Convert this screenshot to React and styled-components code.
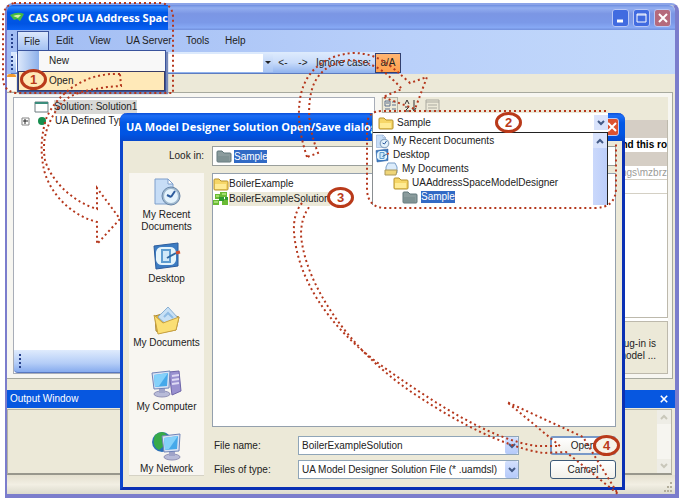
import React from "react";
import styled, { createGlobalStyle, css } from "styled-components";

const Global = createGlobalStyle`
  *, *::before, *::after { box-sizing: border-box; }
  body { margin: 0; background: #fff; color: #222; font: 10px/12px "Liberation Sans", Arial, sans-serif; }
  button, input, select { font: inherit; color: inherit; margin: 0; padding: 0; border: 0; background: none; }
  select { appearance: none; }
  svg { display: block; flex: none; }
`;

const Page = styled.div`
  position: relative;
  display: flex;
  min-height: 100vh;
  padding: 3px 1px 2px 5px;
  overflow: hidden;
`;

/* ---------- main window ---------- */
const MainWindow = styled.main`
  flex: 1;
  min-width: 0;
  display: flex;
  flex-direction: column;
  border: 2px solid #7b7dcc;
  border-top-color: #8ca4e8;
  border-bottom-width: 4px;
  border-right-width: 4px;
  border-radius: 8px 8px 0 0;
  background: #ece9d8;
`;
const TitleBar = styled.header`
  display: flex;
  align-items: stretch;
  height: 25px;
  background: linear-gradient(#6f8fe0, #93aef0 12%, #7b96e4 35%, #7b99e8 70%, #86a8f4 90%, #7290dc);
  border-radius: 6px 6px 0 0;
`;
const TitleActive = styled.h1`
  flex: none;
  display: flex;
  align-items: center;
  gap: 4px;
  width: 161px;
  margin: 0;
  padding-left: 3px;
  white-space: nowrap;
  color: #fff;
  font: bold 11px/14px "Open Sans", "Liberation Sans", sans-serif;
  background: linear-gradient(#0a4fd8, #2a86ff 8%, #0058e8 30%, #0054e3 75%, #0a62f4);
  border-radius: 6px 0 0 0;
`;
const WindowButtons = styled.div`
  display: flex;
  align-items: center;
  gap: 4px;
  margin-left: auto;
  padding-right: 4px;
`;
const CaptionButton = styled.button`
  && {
    flex: none;
    display: grid;
    place-items: center;
    width: ${(p) => (p.$small ? 15 : 17)}px;
    height: 18px;
    border: 1px solid #b9c8f6;
    border-radius: 3px;
    background: ${(p) => p.$tone};
  }
`;
const MenuBar = styled.nav`
  display: flex;
  align-items: center;
  height: 22px;
  padding-left: 4px;
  background: linear-gradient(90deg, #a1bcf3, #b9d0fa 60%, #c3d9fb);
`;
const Grip = styled.span`
  flex: none;
  width: 2px;
  height: 14px;
  margin-right: ${(p) => p.$gap || 4}px;
  background: repeating-linear-gradient(#27418c 0 2px, transparent 2px 4px);
`;
const MenuButton = styled.button`
  height: 21px;
  width: ${(p) => p.$w}px;
  text-align: left;
  padding-left: 7px;
  white-space: nowrap;
  ${(p) => p.$open && css`border: 1px solid #39539c; border-bottom: 0; padding-left: 6px; background: linear-gradient(#dce8fc, #9dbdf2);`}
`;
const ToolArea = styled.div`
  display: flex;
  height: 22px;
  background: linear-gradient(90deg, #a1bcf3, #b9d0fa 60%, #c3d9fb);
`;
const ToolStrip = styled.div`
  display: flex;
  align-items: center;
  width: 390px;
  margin-left: 4px;
  border-radius: 0 4px 4px 0;
  border-bottom: 1px solid #5d7cc0;
  background: linear-gradient(#deebfd, #c9dcfa 50%, #8fb2ee);
`;
const SearchBox = styled.input`
  flex: 1;
  min-width: 0;
  height: 18px;
  && { background: #fff; }
`;
const SearchArrow = styled.button`
  width: 10px;
  height: 18px;
  && { background: linear-gradient(#d9e7fc, #a8c4f3); }
`;
const ToolButton = styled.button`
  width: 20px;
  text-align: center;
  white-space: nowrap;
`;
const CaseLabel = styled.label`
  padding: 0 4px 0 3px;
  white-space: nowrap;
`;
const CaseButton = styled.button`
  width: 26px;
  height: 20px;
  border: 1px solid #33406e;
  background: linear-gradient(#ffb572, #ffa04d);
`;
const TabRow = styled.div`
  height: 18px;
  background: #ece9d8;
`;
const OrangeTab = styled.div`
  width: 9px;
  height: 17px;
  border-top: 3px solid #f29a2e;
  border-radius: 3px 3px 0 0;
  background: #fdfcf8;
`;
const Workspace = styled.div`
  flex: 1;
  display: grid;
  grid-template-columns: 362px minmax(0, 1fr);
  gap: 6px;
  min-height: 0;
  margin-right: 2px;
  padding: 4px 4px 4px 6px;
  border: 1px solid #a7a99e;
  border-left: 0;
  background: #f7f6f1;
`;
const TreePane = styled.section`
  display: flex;
  flex-direction: column;
  border: 1px solid #a8adb8;
  background: #fff;
`;
const Tree = styled.ul`
  flex: 1;
  margin: 0;
  padding: 2px 7px;
  list-style: none;
`;
const TreeRow = styled.li`
  display: flex;
  align-items: center;
  gap: ${(p) => p.$gap}px;
  height: 14px;
  padding-left: ${(p) => p.$indent}px;
  white-space: nowrap;
`;
const TreeText = styled.span`
  padding: 1px 0;
  background: ${(p) => (p.$sel ? "#d8d8d6" : "transparent")};
`;
const PaneFooter = styled.div`
  display: flex;
  align-items: center;
  gap: 94px;
  height: 23px;
  padding-left: 5px;
  border-bottom: 1px solid #5878c0;
  border-radius: 0 0 4px 4px;
  background: linear-gradient(#dfebfd, #b4cdf7 60%, #86abee);
`;
const PropPane = styled.section`
  display: flex;
  flex-direction: column;
  min-width: 0;
  background: #fff;
`;
const PropTools = styled.div`
  display: flex;
  align-items: center;
  gap: 5px;
  height: 23px;
  padding: 0 0 7px 1px;
  background: #ece9d8;
`;
const IconButton = styled.button`
  && {
    display: grid;
    place-items: center;
    width: 16px;
    height: 16px;
    border: 1px solid ${(p) => (p.$on ? "#b5b4a8" : "transparent")};
  }
`;
const PropRows = styled.div`
  flex: 1;
  border-right: 1px solid #bdb9ac;
  border-bottom: 1px solid #bdb9ac;
  background: #fff;
`;
const PropRow = styled.div`
  height: ${(p) => p.$h}px;
  text-align: right;
  white-space: nowrap;
  line-height: 14px;
  border-bottom: ${(p) => (p.$line ? "1px solid #d4d0c4" : "0")};
  background: ${(p) => (p.$band ? "#d5cec5" : "#fff")};
  font-weight: ${(p) => (p.$bold ? "bold" : "normal")};
  color: ${(p) => (p.$bold ? "#000" : "#9b9b98")};
`;
const PropHelp = styled.p`
  height: 53px;
  margin: 3px 0 0;
  padding: 16px 11px 0 0;
  text-align: right;
  border: 1px solid #bdb9ac;
  background: #ece9d8;
`;
const OutputTitle = styled.h2`
  display: flex;
  align-items: center;
  justify-content: space-between;
  height: 18px;
  margin: 11px 0 0;
  padding: 0 6px 0 3px;
  color: #fff;
  font: 10px/12px "Liberation Sans", sans-serif;
  background: #0757e0;
`;
const CloseButton = styled.button`
  display: grid;
  place-items: center;
  width: 11px;
  height: 14px;
`;
const OutputPanel = styled.section`
  display: flex;
  justify-content: flex-end;
  height: 66px;
  margin: 1px 3px 0 0;
  border: 1px solid #b5b3a5;
  border-bottom: 2px solid #98978c;
`;
const FadedScroll = styled.div`
  display: flex;
  flex-direction: column;
  justify-content: space-between;
  width: 14px;
  background: #f6f5f0;
`;
const FadedArrow = styled.button`
  && {
    display: grid;
    place-items: center;
    height: 14px;
    background: #eeede6;
  }
`;
const StatusBar = styled.footer`
  display: flex;
  justify-content: flex-end;
  align-items: flex-end;
  height: 19px;
  padding: 0 2px 2px;
  background: linear-gradient(#e4e0cf, #f2efe3 50%, #dcdacd);
`;

/* ---------- file menu ---------- */
const FileMenu = styled.div`
  position: absolute;
  top: 50px;
  left: 17px;
  width: 149px;
  border: 1px solid #39539c;
  background: #f8f8f8;
  box-shadow: 2px 2px 1px #7688b8;
`;
const FileMenuItem = styled.button`
  display: block;
  width: 100%;
  height: 20px;
  padding-left: 31px;
  text-align: left;
  background: ${(p) => (p.$hot ? "#ffe9b8" : "linear-gradient(90deg, #dce8fb, #8cb0ea 21px, #f8f8f8 21px)")};
  ${(p) => p.$hot && css`outline: 1px solid #3a3c66; outline-offset: -1px;`}
`;

/* ---------- dialog ---------- */
const Dialog = styled.div`
  position: absolute;
  inset: 113px 55px 10px 120px;
  display: flex;
  flex-direction: column;
  border: 3px solid #0c46cc;
  border-top: 0;
  border-right-color: #0a30b4;
  border-bottom-color: #0a30b4;
  border-radius: 7px 7px 0 0;
  background: #ece9d8;
`;
const DialogTitle = styled.header`
  display: flex;
  align-items: center;
  justify-content: space-between;
  height: 28px;
  margin: 0 -3px;
  padding: 0 6px;
  color: #fff;
  font: bold 11px/14px "Open Sans", "Liberation Sans", sans-serif;
  white-space: nowrap;
  border-radius: 7px 7px 0 0;
  background: linear-gradient(#0a4ed8, #1c6df4 10%, #0057e6 35%, #0054e3 75%, #0648cc);
`;
const DialogBody = styled.div`
  flex: 1;
  display: grid;
  grid-template-columns: 75px minmax(0, 1fr);
  grid-template-rows: 20px minmax(0, 1fr);
  gap: 7px;
  min-height: 0;
  padding: 5px 6px 8px 6px;
`;
const LookLabel = styled.label`
  align-self: center;
  text-align: right;
`;
const LookBox = styled.div`
  display: flex;
  align-items: center;
  gap: 2px;
  margin-left: 1px;
  padding-left: 3px;
  border: 1px solid #9a9f9c;
  background: #fff;
`;
const Picked = styled.select`
  && {
    width: 33px;
    height: 13px;
    line-height: 13px;
    color: #fff;
    background: #316ac5;
  }
`;
const Places = styled.nav`
  display: flex;
  flex-direction: column;
  margin-bottom: 3px;
  background: #f8f6f1;
  border-bottom: 1px solid #d5d2c5;
`;
const Place = styled.button`
  flex: none;
  display: flex;
  flex-direction: column;
  align-items: center;
  justify-content: flex-start;
  gap: 2px;
  height: ${(p) => p.$h || 64}px;
  && { padding-top: ${(p) => (p.$h ? 2 : 4)}px; }
  line-height: 12px;
  white-space: pre;
`;
const FileSide = styled.div`
  display: flex;
  flex-direction: column;
  min-width: 0;
  gap: 9px;
  padding-left: 1px;
`;
const FileList = styled.ul`
  flex: 1;
  margin: 0;
  padding: 2px 0;
  list-style: none;
  border: 1px solid #94a0ad;
  background: #fff;
`;
const FileRow = styled.li`
  display: flex;
  align-items: center;
  height: 15px;
`;
const FileName = styled.span`
  padding: 1px 0;
  background: ${(p) => (p.$sel ? "#ece9d8" : "transparent")};
`;
const Form = styled.form`
  display: grid;
  grid-template-columns: 81px minmax(0, 1fr) 66px;
  grid-auto-rows: 19px;
  row-gap: 5px;
  align-items: center;
`;
const FieldLabel = styled.label`
  padding-left: 2px;
  white-space: nowrap;
`;
const Field = styled.div`
  display: flex;
  align-self: stretch;
  margin: 0 31px 0 5px;
  border: 1px solid #8fa5b8;
  background: #fff;
`;
const FieldInput = styled.input`
  flex: 1;
  min-width: 0;
  && { padding: 0 3px; }
`;
const FieldSelect = styled.select`
  flex: 1;
  min-width: 0;
  && { padding: 0 3px; }
`;
const Drop = styled.button`
  && {
    flex: none;
    display: grid;
    place-items: center;
    width: 13px;
    border-radius: 2px;
    background: linear-gradient(#d3e0fd, #b5cafa);
  }
`;
const PushButton = styled.button`
  && {
    height: 19px;
    border: ${(p) => (p.$main ? "2px solid #7899c8" : "1px solid #3d5a78")};
    border-radius: 3px;
    background: linear-gradient(#fff, #f1f0ea);
  }
`;

/* ---------- open look-in list ---------- */
const Popup = styled.div`
  position: absolute;
  top: 113px;
  left: 372px;
  right: 72px;
  background: #fff;
  border-left: 1px solid #8a8f92;
`;
const PopupHead = styled.div`
  display: flex;
  align-items: center;
  gap: 3px;
  height: 19px;
  padding-left: 5px;
`;
const PopupSelect = styled.select`
  flex: 1;
  height: 17px;
`;
const PopupBody = styled.div`
  display: flex;
  height: 73px;
  border: solid #222;
  border-width: 1px 1px 0 0;
`;
const PopupList = styled.ul`
  flex: 1;
  margin: 0;
  padding: 1px 0 0;
  list-style: none;
`;
const PopupRow = styled.li`
  display: flex;
  align-items: center;
  gap: 3px;
  height: 14px;
  padding-left: ${(p) => 2 + p.$level * 9}px;
`;
const PopupText = styled.span`
  ${(p) => p.$sel && css`color: #fff; background: #316ac5;`}
`;
const PopupScroll = styled.div`
  width: 14px;
  background: linear-gradient(90deg, #cad8fb, #bccefa);
`;
const PopupArrow = styled.button`
  && {
    display: grid;
    place-items: center;
    width: 14px;
    height: 15px;
    background: #d9e3fc;
  }
`;

/* ---------- callouts ---------- */
const Arrows = styled.svg`
  position: absolute;
  top: 0;
  left: 0;
  pointer-events: none;
  fill: none;
  stroke: #b5371c;
  stroke-width: 2;
  stroke-dasharray: 2 3;
`;
const Callout = styled.span`
  position: absolute;
  top: ${(p) => p.$y}px;
  left: ${(p) => p.$x}px;
  display: grid;
  place-items: center;
  width: 27px;
  height: 21px;
  border: 3px solid #b93a1a;
  border-radius: 50%;
  color: #b93a1a;
  background: ${(p) => p.$fill || "#fff"};
  font: bold 13px/15px "Liberation Sans", sans-serif;
`;

/* ---------- icons ---------- */
const Folder = ({ gray }) => (
  <svg width="16" height="14" viewBox="0 0 16 14">
    <path d="M1 12V3q0-1 1-1h4l2 2h6q1 0 1 1v7q0 1-1 1H2q-1 0-1-1Z" fill={gray ? "#8b9c9d" : "#f6d667"} stroke={gray ? "#60777a" : "#b5912c"} />
    <path d="M3 6h10M2 7v5h11V7Z" fill={gray ? "#7f9293" : "#ffeb94"} />
  </svg>
);
const Solution = () => (
  <svg width="16" height="13" viewBox="0 0 16 13">
    <path d="M7 0h7v5H7ZM2 2h5v5H2ZM0 8h6v5H0ZM9 7h6v6H9Z" fill="#6abb35" /><path d="M9 1h4v2H9ZM1 9h4v2H1ZM3 3h3v2H3Z" fill="#a3dd70" /><path d="M6 5h5v4H6ZM12 5h3v3h-3Z" fill="#2f9a32" />
  </svg>
);
const Chevron = ({ up, color = "#435a86" }) => (
  <svg width="8" height="6" viewBox="0 0 8 6"><path d={up ? "M1 5l3-3 3 3" : "M1 1l3 3 3-3"} fill="none" stroke={color} strokeWidth="2" /></svg>
);
const Cross = ({ size = 10, width = 2 }) => (
  <svg width={size} height={size} viewBox="0 0 10 10"><path d="M1 1l8 8M9 1l-8 8" stroke="#fff" strokeWidth={width} /></svg>
);
const DocClock = ({ s = 30 }) => (
  <svg width={s} height={s} viewBox="0 0 30 30">
    <path d="M3 2h13l5 5v20H3Z" fill="#c7ddf6" stroke="#7f9fcb" /><path d="M16 2v5h5Z" fill="#fff" stroke="#7f9fcb" />
    <circle cx="19" cy="19" r="9" fill="#9fb8ce" stroke="#6886a8" /><circle cx="19" cy="19" r="7" fill="#e5f3fc" /><path d="M19 20l4-6M19 20l-4-2" stroke="#2c5b9d" strokeWidth="2" />
  </svg>
);
const DesktopIcon = ({ s = 30 }) => (
  <svg width={s} height={s} viewBox="0 0 30 30">
    <path d="M2 5l24-3v23l-22 3Z" fill="#3d7cc2" stroke="#2c5c9c" /><path d="M4 11q1-5 6-5h8q5 0 6 5v8q-1 5-6 5h-8q-5 0-6-5Z" fill="#e5f4fb" />
    <path d="M10 9h8v12h-8Z" fill="#cfe8f8" stroke="#5d9cd0" strokeWidth="2" /><path d="M15 17l9-5" stroke="#2d67a2" strokeWidth="2" /><path d="M24 12l4-1" stroke="#d4502e" strokeWidth="3" />
  </svg>
);
const DocsIcon = () => (
  <svg width="30" height="30" viewBox="0 0 30 30">
    <path d="M3 11l10-3 14 4-3 13-16 3-4-2Z" fill="#e3b740" stroke="#a5873c" /><path d="M6 12l10-10 10 11-9 9Z" fill="#c7e0f5" stroke="#8bb0d2" /><path d="M12 12l4-4 5 5" fill="none" stroke="#8fbce4" strokeWidth="2" />
    <path d="M2 10l9 8 16-6-3 13-18 4Z" fill="#fbdf74" stroke="#c9a241" />
  </svg>
);
const Screen = ({ globe }) => (
  <svg width="32" height="30" viewBox="0 0 32 30">
    {globe ? (
      <g><circle cx="11" cy="11" r="10" fill="#2a70b8" /><path d="M4 4q8-6 12 0l-4 5 1 6-5 4q-8-4-4-15" fill="#37aa49" /></g>
    ) : (
      <g><path d="M18 3l10-1 2 20-9 4Z" fill="#9a91d0" stroke="#6e65a8" /><path d="M21 7l7-1M21 11l7-1M21 15l7-1" stroke="#dedaf4" strokeWidth="2" /></g>
    )}
    <g transform={globe ? "translate(10 2)" : "translate(0 1)"}>
      <ellipse cx="11" cy="24" rx="8" ry="3" fill="#b8bbd8" stroke="#9091b5" /><path d="M8 17h6v6H8Z" fill="#9fa3c8" />
      <path d="M1 3l18-2-1 17-15 1Z" fill="#d8e2f3" stroke="#7084b8" /><path d="M3 5l14-2-1 13-12 1Z" fill="#45a9ea" /><path d="M3 5l14-2-9 13-4 1Z" fill="#84d1fa" />
    </g>
  </svg>
);
const Dots = () => (
  <svg width="10" height="10" viewBox="0 0 10 10"><path d="M7 0h2v2H7ZM4 4h2v2H4ZM7 4h2v2H7ZM1 8h2v2H1ZM4 8h2v2H4ZM7 8h2v2H7Z" fill="#b3ae9b" /></svg>
);

const menus = [["File", 32, true], ["Edit", 33], ["View", 37], ["UA Server", 60], ["Tools", 39], ["Help", 40]];
const lookRows = [
  ["My Recent Documents", 0, <DocClock s={15} />],
  ["Desktop", 0, <DesktopIcon s={15} />],
  ["My Documents", 1, <svg width="15" height="14" viewBox="0 0 15 14"><path d="M2 5l2-4h7l2 4v6H2Z" fill="#dcecfb" stroke="#7b9fc8" /><path d="M1 8h12l-1 5H1Z" fill="#efd579" stroke="#a9975a" /></svg>],
  ["UAAddressSpaceModelDesigner", 2, <Folder />],
  ["Sample", 3, <Folder gray />, true],
];

function Main() {
  return (
    <MainWindow>
      <TitleBar>
        <TitleActive>
          <svg width="14" height="11" viewBox="0 0 14 11"><path d="M0 3Q8-1 14 2L10 9 7 7 4 8Z" fill="#45ba42" /><path d="M3 4q5-2 8-1L8 6Z" fill="#d5f0a8" /></svg>
          CAS OPC UA Address Spac
        </TitleActive>
        <WindowButtons>
          <CaptionButton aria-label="Minimize" $tone="#416be0"><svg width="11" height="11"><path d="M2 9h6" stroke="#fff" strokeWidth="3" /></svg></CaptionButton>
          <CaptionButton aria-label="Maximize" $tone="#416be0"><svg width="11" height="11" viewBox="0 0 11 11"><path d="M1 2h9v8H1ZM1 3h9" fill="none" stroke="#fff" strokeWidth="1" /></svg></CaptionButton>
          <CaptionButton aria-label="Close" $tone="#b56a7c"><Cross /></CaptionButton>
        </WindowButtons>
      </TitleBar>
      <MenuBar>
        <Grip $gap={4} />
        {menus.map(([t, w, o]) => <MenuButton key={t} $w={w} $open={o}>{t}</MenuButton>)}
      </MenuBar>
      <ToolArea>
        <ToolStrip>
          <Grip $gap={3} />
          <SearchBox aria-label="Search" />
          <SearchArrow aria-label="History"><svg width="10" height="6"><path d="M2 1h6L5 4Z" fill="#222" /></svg></SearchArrow>
          <ToolButton>&lt;-</ToolButton>
          <ToolButton>-&gt;</ToolButton>
          <CaseLabel htmlFor="case">Ignore case:</CaseLabel>
          <CaseButton id="case">a/A</CaseButton>
        </ToolStrip>
      </ToolArea>
      <TabRow><OrangeTab /></TabRow>
      <Workspace>
        <TreePane>
          <Tree>
            <TreeRow $indent={13} $gap={5}>
              <svg width="15" height="12" viewBox="0 0 15 12"><path d="M1 1h13v10H1Z" fill="#fff" stroke="#6e7c80" /><path d="M1 2h13" stroke="#3b8d7c" strokeWidth="2" /></svg>
              <TreeText $sel>Solution: Solution1</TreeText>
            </TreeRow>
            <TreeRow $indent={0} $gap={8}>
              <svg width="9" height="9" viewBox="0 0 9 9"><path d="M1 1h7v7H1Z" fill="#fff" stroke="#858585" /><path d="M2 4h5M4 2v5" stroke="#222" /></svg>
              <svg width="9" height="9"><circle cx="4" cy="4" r="4" fill="#168e4e" /></svg>
              <TreeText>UA Defined Types</TreeText>
            </TreeRow>
          </Tree>
          <PaneFooter><Grip /><svg width="5" height="6"><circle cx="3" cy="3" r="2" fill="#222" /></svg></PaneFooter>
        </TreePane>
        <PropPane>
          <PropTools>
            <IconButton $on aria-label="Categorized"><svg width="14" height="12"><path d="M2 2h5v5H2ZM9 3h4M9 6h4M3 4h3M2 10h5M9 10h4" fill="none" stroke="#5c718e" /></svg></IconButton>
            <IconButton aria-label="Alphabetical"><svg width="14" height="13"><path d="M1 5l2-4 2 4M1 8h4l-4 4h4M10 1v10M8 9l2 3 2-3" fill="none" stroke="#333" /></svg></IconButton>
            <IconButton aria-label="Property pages"><svg width="16" height="13"><path d="M1 1h13v11H1ZM1 3h13M3 6h9M3 9h9" fill="none" stroke="#aaa99f" /></svg></IconButton>
          </PropTools>
          <PropRows>
            <PropRow $h={18} $band />
            <PropRow $h={14} $bold>nd this ro</PropRow>
            <PropRow $h={14} $band />
            <PropRow $h={14} $line>ngs\mzbrz</PropRow>
            <PropRow $h={14} $line />
          </PropRows>
          <PropHelp>ug-in is<br />model ...</PropHelp>
        </PropPane>
      </Workspace>
      <OutputTitle>Output Window<CloseButton aria-label="Close output"><Cross size={8} /></CloseButton></OutputTitle>
      <OutputPanel>
        <FadedScroll>
          <FadedArrow aria-label="Up"><Chevron up color="#c9c7ba" /></FadedArrow>
          <FadedArrow aria-label="Down"><Chevron color="#c9c7ba" /></FadedArrow>
        </FadedScroll>
      </OutputPanel>
      <StatusBar><Dots /></StatusBar>
    </MainWindow>
  );
}

function OpenDialog() {
  return (
    <Dialog role="dialog" aria-label="Open/Save">
      <DialogTitle>
        UA Model Designer Solution Open/Save dialog
        <CaptionButton $small aria-label="Close dialog" $tone="#dd5230"><Cross /></CaptionButton>
      </DialogTitle>
      <DialogBody>
        <LookLabel htmlFor="look">Look in:</LookLabel>
        <LookBox><Folder gray /><Picked id="look"><option>Sample</option></Picked></LookBox>
        <Places>
          <Place><DocClock />{"My Recent\nDocuments"}</Place>
          <Place><DesktopIcon />Desktop</Place>
          <Place><DocsIcon />My Documents</Place>
          <Place><Screen />My Computer</Place>
          <Place $h={46}><Screen globe />My Network</Place>
        </Places>
        <FileSide>
          <FileList>
            <FileRow><Folder /><FileName>BoilerExample</FileName></FileRow>
            <FileRow><Solution /><FileName $sel>BoilerExampleSolution</FileName></FileRow>
          </FileList>
          <Form onSubmit={(e) => e.preventDefault()}>
            <FieldLabel htmlFor="fname">File name:</FieldLabel>
            <Field><FieldInput id="fname" defaultValue="BoilerExampleSolution" /><Drop type="button" aria-label="Recent names"><Chevron /></Drop></Field>
            <PushButton $main>Open</PushButton>
            <FieldLabel htmlFor="ftype">Files of type:</FieldLabel>
            <Field><FieldSelect id="ftype"><option>UA Model Designer Solution File (* .uamdsl)</option></FieldSelect><Drop type="button" aria-label="Types"><Chevron /></Drop></Field>
            <PushButton type="button">Cancel</PushButton>
          </Form>
        </FileSide>
      </DialogBody>
    </Dialog>
  );
}

function LookInPopup() {
  return (
    <Popup>
      <PopupHead>
        <Folder />
        <PopupSelect aria-label="Folder"><option>Sample</option></PopupSelect>
        <PopupArrow aria-label="Toggle list"><Chevron /></PopupArrow>
      </PopupHead>
      <PopupBody>
        <PopupList>
          {lookRows.map(([t, l, icon, sel]) => <PopupRow key={t} $level={l}>{icon}<PopupText $sel={sel}>{t}</PopupText></PopupRow>)}
        </PopupList>
        <PopupScroll><PopupArrow aria-label="Scroll up"><Chevron up /></PopupArrow></PopupScroll>
      </PopupBody>
    </Popup>
  );
}

export default function App() {
  return (
    <Page>
      <Global />
      <Main />
      <OpenDialog />
      <LookInPopup />
      <FileMenu>
        <FileMenuItem>New</FileMenuItem>
        <FileMenuItem $hot>Open</FileMenuItem>
      </FileMenu>
      <Arrows width="680" height="500" viewBox="0 0 680 500">
        <path d="M14 3H160Q172 4 173 16V93H16Q3 91 3 78V16Q4 6 14 3" />
        <path d="M606 111H382Q367 111 367 126V190Q368 208 386 208H594Q616 208 616 188V142" />
        <path d="M120 74C84 72 56 95 46 119C40 140 41 155 44 170C50 193 70 215 97 222V244L120 219L97 188V209C70 201 50 178 45 160C41 137 49 120 60 105C70 92 90 90 107 87L121 86Z" />
        <path d="M307 157Q294 118 302 90C309 68 327 55 353 53C378 53 390 65 410 83L427 77L415 109L383 97L402 89C390 76 375 61 350 60C330 62 318 73 313 86C306 107 309 130 318 153Z" />
        <path d="M302 203Q293 214 294 232C297 275 325 325 382 366C430 400 490 440 537 446L560 446L507 402L583 437L618 494L566 452L543 453C500 446 450 418 410 391C350 350 305 285 301 235Q301 217 310 206" />
      </Arrows>
      <Callout $x={20} $y={69} $fill="#ffe9b8">1</Callout>
      <Callout $x={495} $y={112}>2</Callout>
      <Callout $x={327} $y={187}>3</Callout>
      <Callout $x={593} $y={435} $fill="#f7f4ea">4</Callout>
    </Page>
  );
}
